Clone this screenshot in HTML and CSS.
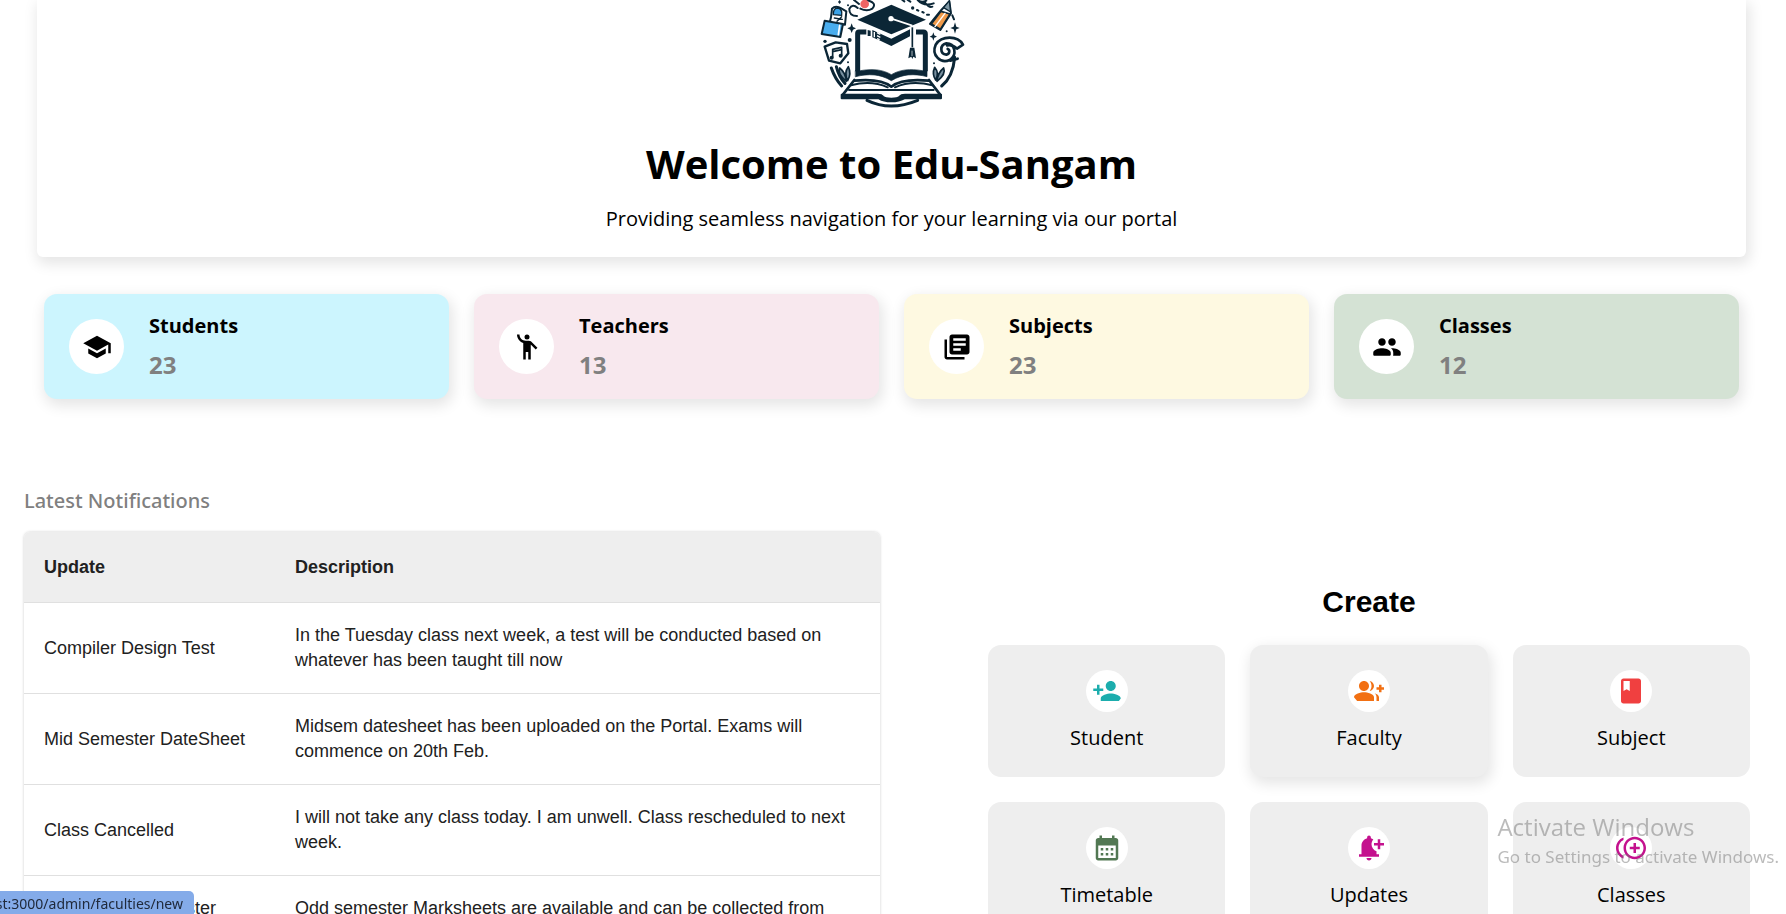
FILE: index.html
```html
<!DOCTYPE html>
<html lang="en">
<head>
<meta charset="utf-8">
<title>Edu-Sangam</title>
<link rel="stylesheet" href="styles.css">
</head>
<body>
<main class="page">
  <section class="welcome">
    <svg class="logo" viewBox="5 0 660 360" role="img" aria-label="Edu-Sangam logo">
      <g fill="none" stroke="#0b2636" stroke-width="9" stroke-linecap="round" stroke-linejoin="round">
        <path d="M153 204Q164 236 184 258M168 200Q176 232 194 250M523 172Q518 230 484 258M260 301Q330 335 412 301"/>
        <path d="M232 214V100Q232 96 236 96H258M407 96H429Q435 96 435 102V214" stroke-width="15" stroke-linecap="butt"/>
        <path d="M226 212H240C276 206 306 208 333 224C360 208 390 206 426 212H440V230C402 220 366 222 333 242C300 222 264 220 226 230Z" fill="#0b2636" stroke-width="2"/>
        <path d="M222 240L186 286M446 240L481 286M222 242C262 238 308 240 333 260C358 240 404 238 446 242" stroke-width="8"/>
        <path d="M212 256C250 246 290 248 322 262M456 256C418 246 376 248 344 262M206 270H460" stroke-width="6"/>
        <path d="M184 284H292Q304 284 308 290Q314 296 333 296Q352 296 358 290Q362 284 374 284H482V295H372Q356 304 333 304Q310 304 296 295H184Z" fill="#0b2636" stroke-width="6"/>
      </g>
      <path d="M231 59L333 14L437 59L333 103Z" fill="#0b2636"/>
      <path d="M262 90L271 92V108L262 108ZM276 90L333 116L389 88V109L333 138L300 122L276 112Z" fill="#0b2636"/>
      <path d="M282 96V112M290 98L300 103M290 107L300 112M290 116L298 119" stroke="#fff" stroke-width="4"/>
      <path d="M333 56L394 76V144" fill="none" stroke="#fff" stroke-width="5"/>
      <circle cx="332" cy="56" r="8" fill="#fff"/>
      <path d="M396 82V142" stroke="#0b2636" stroke-width="5"/>
      <path d="M389 143H402L407 175L399 170L396 177L393 170L384 175Z" fill="#0b2636"/>
      <path d="M395 152V168" stroke="#fff" stroke-width="2"/>
      <g stroke="#0b2636" stroke-width="6" stroke-linejoin="round" stroke-linecap="round">
        <path d="M152 52L155 26Q166 14 184 26L198 34L194 74L148 68Z" fill="#fff"/>
        <path d="M159 44Q158 24 173 24Q187 28 184 46Z" fill="#3ba3e8" stroke-width="4"/>
        <path d="M162 54L186 58M170 64L184 50" stroke-width="4"/>
        <path d="M133 62L188 72L180 111L124 102Z" fill="#49adee"/>
        <path d="M178 76L174 104" stroke="#fff" stroke-width="5"/>
        <path d="M133 140L166 127L200 132L204 160L180 190L146 182Z" fill="none" stroke-width="7"/>
        <path d="M157 172V148L184 142V166M157 155L184 149" fill="none" stroke-width="5"/>
        <circle cx="154" cy="173" r="3"/><circle cx="181" cy="167" r="3"/>
        <path d="M483 30L507 4L512 40L480 90L449 72Z" fill="#fff"/>
        <path d="M482 34L509 42L480 88L453 72Z" fill="#ef9a4a" stroke-width="5"/>
        <path d="M494 40L464 80" stroke="#fff" stroke-width="4"/>
        <path d="M490 23L507 2L511 36Z" fill="#7f98a5" stroke-width="4"/>
        <path d="M548 134C532 106 484 106 466 134C452 166 482 192 508 180C532 164 524 130 498 130C478 134 478 162 498 164C508 162 510 150 502 147M548 134L530 146Q516 132 500 136M510 182L532 176" fill="none" stroke-width="8"/>
        <path d="M178 204Q170 222 198 244Q196 218 178 204ZM204 200Q190 218 202 242Q214 222 204 200ZM490 204Q498 222 470 244Q472 218 490 204ZM463 202Q454 222 466 240Q478 220 463 202Z" fill="#7890a0" stroke-width="5"/>
        <path d="M230 48Q206 48 207 26Q216 10 232 24M221 0L236 12M258 0Q292 8 276 26Q260 36 240 26M366 0L372 4M382 0L390 5M412 0Q424 10 438 2M434 8Q446 24 456 20M412 0Q430 20 460 10M410 30L414 32M426 36L430 38M440 44H446M516 46L521 58" fill="none"/>
        <circle cx="253" cy="12" r="13" fill="#ef6464" stroke="none"/>
      </g>
      <g fill="#0b2636">
        <path d="M214 70L218 81L227 85L218 89L214 99L210 89L201 85L210 81ZM459 97L462 106L470 110L462 113L459 122L456 113L448 110L456 106ZM524 67L528 80L538 84L528 88L524 101L520 88L510 84L520 80ZM178 0L182 6L178 12L173 6Z"/>
        <circle cx="134" cy="124" r="5"/><circle cx="208" cy="120" r="6"/><circle cx="203" cy="187" r="3"/><circle cx="461" cy="190" r="3"/><circle cx="397" cy="24" r="5"/><circle cx="499" cy="94" r="3"/><circle cx="203" cy="16" r="3"/>
      </g>
    </svg>
    <h1 class="welcome-title">Welcome to Edu-Sangam</h1>
    <p class="welcome-text">Providing seamless navigation for your learning via our portal</p>
  </section>

  <section class="stats">
    <article class="stat stat-students">
      <span class="stat-icon"><svg class="icon" viewBox="0 0 24 24"><path d="M5 13.18v4L12 21l7-3.82v-4L12 17l-7-3.82zM12 3L1 9l11 6 9-4.91V17h2V9L12 3z"/></svg></span>
      <div class="stat-body"><h2 class="stat-name">Students</h2><p class="stat-value">23</p></div>
    </article>
    <article class="stat stat-teachers">
      <span class="stat-icon"><svg class="icon" viewBox="0 0 24 24"><circle cx="12" cy="4" r="2"/><path d="M15.89 8.11C15.5 7.72 14.83 7 13.53 7h-2.54C8.24 6.99 6 4.75 6 2H4c0 3.16 2.11 5.84 5 6.71V22h2v-6h2v6h2V10.05L18.95 14l1.41-1.41-4.47-4.48z"/></svg></span>
      <div class="stat-body"><h2 class="stat-name">Teachers</h2><p class="stat-value">13</p></div>
    </article>
    <article class="stat stat-subjects">
      <span class="stat-icon"><svg class="icon" viewBox="0 0 24 24"><path d="M4 6H2v14c0 1.1.9 2 2 2h14v-2H4V6zm16-4H8c-1.1 0-2 .9-2 2v12c0 1.1.9 2 2 2h12c1.1 0 2-.9 2-2V4c0-1.1-.9-2-2-2zm-1 9H9V9h10v2zm-4 4H9v-2h6v2zm4-8H9V5h10v2z"/></svg></span>
      <div class="stat-body"><h2 class="stat-name">Subjects</h2><p class="stat-value">23</p></div>
    </article>
    <article class="stat stat-classes">
      <span class="stat-icon"><svg class="icon" viewBox="0 0 24 24"><path d="M16 11c1.66 0 2.99-1.34 2.99-3S17.66 5 16 5s-3 1.34-3 3 1.34 3 3 3zm-8 0c1.66 0 2.99-1.34 2.99-3S9.66 5 8 5 5 6.34 5 8s1.34 3 3 3zm0 2c-2.33 0-7 1.17-7 3.5V18c0 .55.45 1 1 1h12c.55 0 1-.45 1-1v-1.5c0-2.33-4.67-3.5-7-3.5zm8 0c-.29 0-.62.02-.97.05.02.01.03.03.04.04 1.14.83 1.93 1.94 1.93 3.41V18c0 .35-.07.69-.18 1H22c.55 0 1-.45 1-1v-1.5c0-2.33-4.67-3.5-7-3.5z"/></svg></span>
      <div class="stat-body"><h2 class="stat-name">Classes</h2><p class="stat-value">12</p></div>
    </article>
  </section>

  <div class="columns">
    <section class="notifications">
      <h2 class="notifications-title">Latest Notifications</h2>
      <table class="updates">
        <thead><tr><th class="col-update" scope="col">Update</th><th scope="col">Description</th></tr></thead>
        <tbody>
          <tr><td>Compiler Design Test</td><td>In the Tuesday class next week, a test will be conducted based on whatever has been taught till now</td></tr>
          <tr><td>Mid Semester DateSheet</td><td>Midsem datesheet has been uploaded on the Portal. Exams will commence on 20th Feb.</td></tr>
          <tr><td>Class Cancelled</td><td>I will not take any class today. I am unwell. Class rescheduled to next week.</td></tr>
          <tr><td class="cell-top">Result Odd Semester</td><td>Odd semester Marksheets are available and can be collected from administration.</td></tr>
        </tbody>
      </table>
    </section>

    <section class="create">
      <h2 class="create-title">Create</h2>
      <nav class="tiles">
        <a class="tile" href="#student"><span class="tile-icon teal"><svg class="icon" viewBox="0 0 24 24"><path d="M15 12c2.21 0 4-1.79 4-4s-1.79-4-4-4-4 1.79-4 4 1.79 4 4 4zm-9-2V7H4v3H1v2h3v3h2v-3h3v-2H6zm9 4c-2.67 0-8 1.34-8 4v2h14.5l1.5-2c0-2.66-5.33-4-8-4z"/></svg></span>Student</a>
        <a class="tile tile-active" href="#faculty"><span class="tile-icon orange"><svg class="icon" viewBox="0 0 24 24"><path d="M22 9V7h-2v2h-2v2h2v2h2v-2h2V9zM8 12c2.21 0 4-1.79 4-4s-1.79-4-4-4-4 1.79-4 4 1.79 4 4 4zm0 1c-2.67 0-8 1.34-8 4l2.5 3H16v-3c0-2.66-5.33-4-8-4zm4.51-8.95C13.43 5.11 14 6.49 14 8s-.57 2.89-1.49 3.95C14.47 11.7 16 10.04 16 8s-1.53-3.7-3.49-3.95zm4.02 9.78C17.42 14.66 18 15.7 18 17v3h2v-3c0-1.45-1.59-2.51-3.47-3.17z"/></svg></span>Faculty</a>
        <a class="tile" href="#subject"><span class="tile-icon red"><svg class="icon" viewBox="0 0 24 24"><path fill-rule="evenodd" d="M18 2H6c-1.1 0-2 .9-2 2v16c0 1.1.9 2 2 2h12c1.1 0 2-.9 2-2V4c0-1.1-.9-2-2-2zM6 4h5v8l-2.5-1.5L6 12V4z"/></svg></span>Subject</a>
        <a class="tile" href="#timetable"><span class="tile-icon green"><svg class="icon" viewBox="0 0 24 24"><path d="M19 4h-1V2h-2v2H8V2H6v2H5c-1.11 0-1.99.9-1.99 2L3 20c0 1.1.89 2 2 2h14c1.1 0 2-.9 2-2V6c0-1.1-.9-2-2-2zm0 16H5V10h14v10zM9 14H7v-2h2v2zm4 0h-2v-2h2v2zm4 0h-2v-2h2v2zm-8 4H7v-2h2v2zm4 0h-2v-2h2v2zm4 0h-2v-2h2v2z"/></svg></span>Timetable</a>
        <a class="tile" href="#updates"><span class="tile-icon magenta"><svg class="icon" viewBox="0 0 24 24"><path d="M10 20h4c0 1.1-.9 2-2 2s-2-.9-2-2zm4-11c0 2.61 1.67 4.83 4 5.66V17h2v2H4v-2h2v-7c0-2.79 1.91-5.14 4.5-5.8V3.5c0-.83.67-1.5 1.5-1.5s1.5.67 1.5 1.5v.7c.71.18 1.36.49 1.95.9C14.54 6.14 14 7.51 14 9zm10-1h-3V5h-2v3h-3v2h3v3h2v-3h3V8z"/></svg></span>Updates</a>
        <a class="tile" href="#classes"><span class="tile-icon magenta"><svg class="icon" viewBox="0 0 24 24"><path d="M16 8h-2v3h-3v2h3v3h2v-3h3v-2h-3zM2 12c0-2.79 1.64-5.2 4.01-6.32V3.52C2.52 4.76 0 8.09 0 12s2.52 7.24 6.01 8.48v-2.16C3.64 17.2 2 14.79 2 12zm13-9c-4.96 0-9 4.04-9 9s4.04 9 9 9 9-4.04 9-9-4.04-9-9-9zm0 16c-3.86 0-7-3.14-7-7s3.14-7 7-7 7 3.14 7 7-3.14 7-7 7z"/></svg></span>Classes</a>
      </nav>
    </section>
  </div>
</main>
<div class="status-bar"><span>st:3000/admin/faculties/new</span></div>
<aside class="watermark">
  <p class="watermark-title">Activate Windows</p>
  <p class="watermark-text">Go to Settings to activate Windows.</p>
</aside>
</body>
</html>
```
FILE: styles.css
```css
* { box-sizing: border-box; }

body {
  margin: 0;
  height: 100vh;
  overflow: hidden;
  background: #fff;
  color: #000;
  font-family: "Open Sans", "Noto Sans", sans-serif;
  font-size: 20px;
}

h1, h2, p { margin: 0; }

.page { padding: 0 3px 0 0; }

.welcome {
  display: flex;
  flex-direction: column;
  align-items: center;
  margin: 0 37px;
  padding-bottom: 24px;
  border-radius: 0 0 6px 6px;
  box-shadow: 2px 5px 14px 2px rgba(0, 0, 0, 0.1);
}

.logo { width: 220px; height: 120px; }

.welcome-title {
  margin: 17px 0 14px;
  font-size: 40px;
  line-height: 54px;
  font-weight: 700;
}

.welcome-text { line-height: 28px; }

.stats {
  display: grid;
  grid-template-columns: repeat(4, 1fr);
  gap: 25px;
  margin: 37px 44px 0;
}

.stat {
  display: flex;
  align-items: center;
  gap: 25px;
  height: 105px;
  padding: 0 25px;
  border-radius: 13px;
  box-shadow: 2px 5px 14px 2px rgba(0, 0, 0, 0.1);
}

.stat-students { background: #ccf5fe; }
.stat-teachers { background: #f8e8ee; }
.stat-subjects { background: #fef9e1; }
.stat-classes { background: #d4e2d4; }

.stat-icon {
  display: grid;
  place-items: center;
  width: 55px;
  height: 55px;
  border-radius: 50%;
  background: #fff;
}

.icon { display: block; width: 30px; height: 30px; fill: currentColor; }

.stat-name { font-size: 20px; line-height: 28px; font-weight: 700; }

.stat-value {
  margin-top: 8px;
  color: gray;
  font-size: 24px;
  line-height: 34px;
  font-weight: 700;
}

.columns {
  display: grid;
  grid-template-columns: 856fr 762fr;
  gap: 108px;
  margin: 87px 33px 0 24px;
}

.notifications-title {
  margin-bottom: 17px;
  color: gray;
  font-family: "Noto Sans", "Open Sans", sans-serif;
  font-size: 20px;
  line-height: 29px;
  font-weight: 500;
}

.updates {
  width: 100%;
  border-spacing: 0;
  border-radius: 6px;
  color: #212121;
  font-family: "Liberation Sans", Arial, sans-serif;
  font-size: 18px;
  line-height: 25px;
  text-align: left;
  box-shadow: 0 0 3px rgba(0, 0, 0, 0.2);
}

.updates th,
.updates td {
  padding: 20px;
  border-bottom: 1px solid #e0e0e0;
}

.updates th {
  height: 71px;
  background: #eee;
  font-weight: 700;
}

.updates th:first-child { border-top-left-radius: 6px; }
.updates th:last-child { border-top-right-radius: 6px; }
.col-update { width: 251px; }
.updates .cell-top { vertical-align: top; }

.create-title {
  margin: 96px 0 23px;
  font-family: "Liberation Sans", Arial, sans-serif;
  font-size: 30px;
  line-height: 40px;
  font-weight: 700;
  text-align: center;
}

.tiles {
  display: grid;
  grid-template-columns: repeat(3, 1fr);
  gap: 25px;
}

.tile {
  display: flex;
  flex-direction: column;
  align-items: center;
  gap: 12px;
  padding: 25px;
  border-radius: 13px;
  background: #eee;
  color: #000;
  line-height: 28px;
  text-decoration: none;
}

.tile-active {
  box-shadow: 2px 5px 14px 2px rgba(0, 0, 0, 0.1);
}

.tile-icon {
  padding: 6px;
  border-radius: 50%;
  background: #fff;
}

.teal { color: #1cadad; }
.orange { color: #f27013; }
.red { color: #f04040; }
.green { color: #527853; }
.magenta { color: #c4118e; }

.status-bar {
  position: fixed;
  left: 0;
  bottom: 0;
  display: flex;
  justify-content: flex-end;
  width: 194px;
  height: 23px;
  padding: 0 11px 0 0;
  overflow: hidden;
  border-top-right-radius: 5px;
  background: #84abe9;
  color: #202a3c;
  font-family: "Noto Sans", "Open Sans", sans-serif;
  font-size: 14px;
  line-height: 25px;
  white-space: nowrap;
}

.watermark {
  position: fixed;
  right: 7px;
  bottom: 44px;
  color: rgba(120, 120, 120, 0.5);
  pointer-events: none;
  white-space: nowrap;
}

.watermark-title { font-size: 24px; line-height: 34px; }

.watermark-text {
  font-family: "Noto Sans", "Open Sans", sans-serif;
  font-size: 17px;
  line-height: 26px;
}
```
